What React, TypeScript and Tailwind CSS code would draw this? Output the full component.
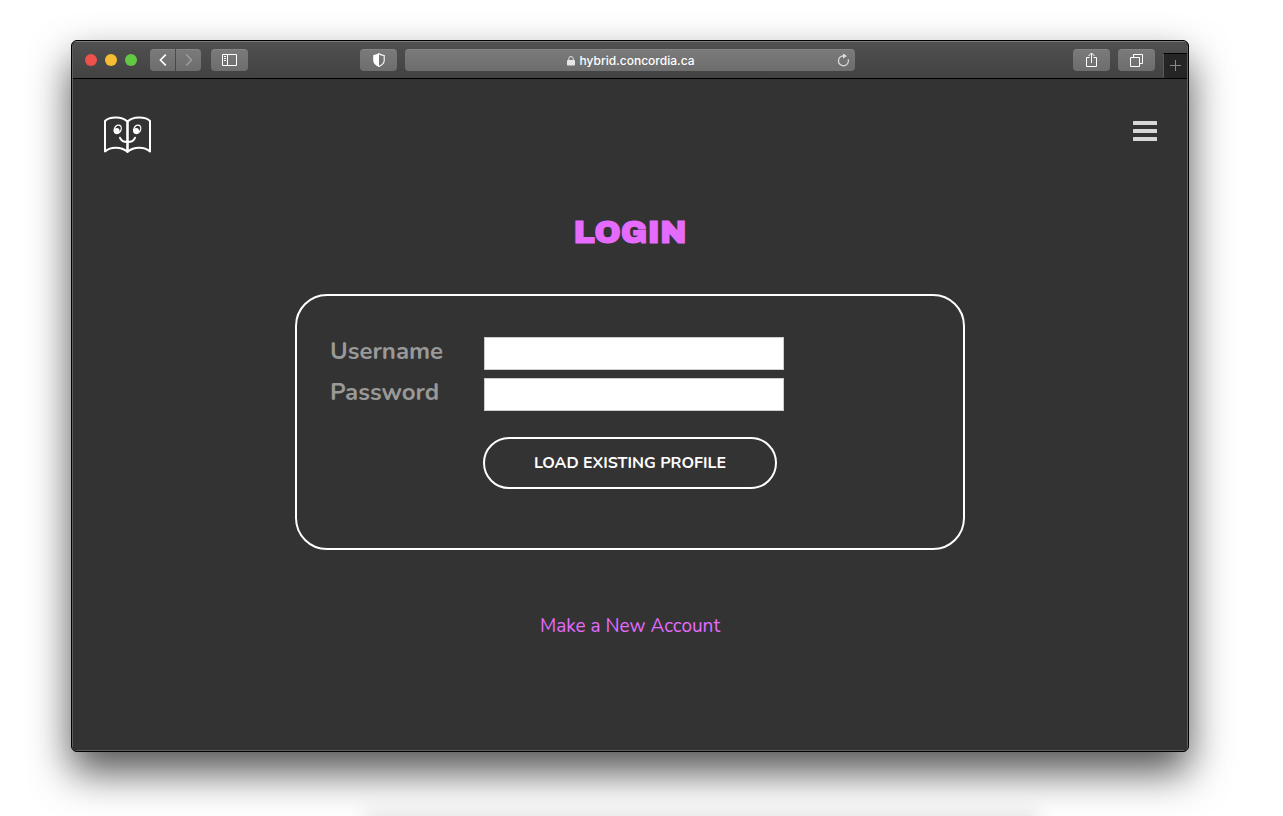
import type { ReactNode } from "react";

interface ToolbarButtonProps {
    label: string;
    className: string;
    children: ReactNode;
}

const ToolbarButton = ({ label, className, children }: ToolbarButtonProps) => (
    <button
        type="button"
        aria-label={label}
        className={`flex h-[22px] shrink-0 items-center justify-center border-t border-[#858585] bg-linear-to-b from-[#7a7a7a] to-[#6d6d6d] pb-px text-white ${className}`}
    >
        {children}
    </button>
);

const Toolbar = () => (
    <div className="flex h-[37px] items-center border-b border-black bg-linear-to-b from-[#505050] to-[#424242]">
        {/* Window controls and navigation */}
        <div className="flex w-[287px] shrink-0 items-center pl-3">
            <div className="flex gap-2">
                <span className="size-3 rounded-full bg-[#ed524a]" />
                <span className="size-3 rounded-full bg-[#f6bd32]" />
                <span className="size-3 rounded-full bg-[#61ca42]" />
            </div>
            <div className="ml-[13px] flex gap-px">
                <ToolbarButton label="Back" className="w-[25px] rounded-l">
                    <svg viewBox="0 0 8 12" className="h-3 w-2" fill="none" stroke="currentColor" strokeWidth="1.6">
                        <path d="M6.8 .6 1.4 6l5.4 5.4" />
                    </svg>
                </ToolbarButton>
                <ToolbarButton label="Forward" className="w-[25px] rounded-r">
                    <svg viewBox="0 0 8 12" className="h-3 w-2 text-[#a0a0a0]" fill="none" stroke="currentColor" strokeWidth="1.4">
                        <path d="M1.2 .6 6.6 6l-5.4 5.4" />
                    </svg>
                </ToolbarButton>
            </div>
            <ToolbarButton label="Show sidebar" className="ml-[10px] w-[37px] rounded">
                <svg viewBox="0 0 15 12" className="h-3 w-[15px]" fill="none" stroke="currentColor">
                    <path d="M.5 .5h14v11H.5zM5.5 .5v11M2 2.5h2M2 4.5h2M2 6.5h2" />
                </svg>
            </ToolbarButton>
        </div>

        {/* Address bar */}
        <div className="flex min-w-0 flex-1 gap-2">
            <ToolbarButton label="Privacy report" className="w-[37px] rounded">
                <svg viewBox="0 0 12 14" className="h-[14px] w-3">
                    <path d="M6 .8c1.4 1.1 3.1 1.6 5.2 1.7v5c0 2.6-1.7 4.4-5.2 5.9C2.5 11.9.8 10.1.8 7.5v-5C2.9 2.4 4.6 1.9 6 .8z" fill="none" stroke="currentColor" strokeWidth="1.1" />
                    <path d="M6 .8v12.6C2.5 11.9.8 10.1.8 7.5v-5C2.9 2.4 4.6 1.9 6 .8z" fill="currentColor" />
                </svg>
            </ToolbarButton>
            <div className="flex h-[22px] min-w-0 flex-1 items-center rounded border-t border-[#858585] bg-linear-to-b from-[#7a7a7a] to-[#6d6d6d] pr-1 pl-5 text-white">
                <div className="flex flex-1 items-center justify-center gap-1">
                    <svg viewBox="0 0 8 10" className="h-[10px] w-2 text-[#e6e6e6]">
                        <rect x="0" y="4" width="8" height="5.5" rx=".8" fill="currentColor" />
                        <path d="M1.8 4.5V2.700a2.2 2.2 0 0 1 4.4 0v2" fill="none" stroke="currentColor" />
                    </svg>
                    <span className="font-['Inter',sans-serif] text-xs font-medium">hybrid.concordia.ca</span>
                </div>
                <button type="button" aria-label="Reload" className="text-[#e0e0e0]">
                    <svg viewBox="0 0 14 14" className="size-[14px]" fill="none" stroke="currentColor" strokeWidth="1.2">
                        <path d="M11.2 5.2A5 5 0 1 1 6.500 1.8" />
                        <path d="M6 -.6 9.9 2 6 4.6z" fill="currentColor" stroke="none" />
                    </svg>
                </button>
            </div>
        </div>

        <div className="flex w-[332px] shrink-0 items-center justify-end self-stretch">
            <div className="flex gap-2">
                <ToolbarButton label="Share" className="w-[37px] rounded">
                    <svg viewBox="0 0 13 16" className="h-4 w-[13px]" fill="none" stroke="currentColor">
                        <path d="M4.5 5.5h-3v9h10v-9h-3M6.5 11V1.2M3.5 4l3-3 3 3" />
                    </svg>
                </ToolbarButton>
                <ToolbarButton label="Show tabs" className="w-[37px] rounded">
                    <svg viewBox="0 0 13 13" className="size-[13px]" fill="none" stroke="currentColor">
                        <path d="M.5 3.5h9v9h-9zM3.5 3.5v-3h9v9h-3" />
                    </svg>
                </ToolbarButton>
            </div>
            <button
                type="button"
                aria-label="New tab"
                className="ml-2 flex h-[25px] w-6 items-center justify-center self-end border-t border-l border-t-black border-l-[#5a5a5a] bg-[#252525] pb-px text-[#8a8a8a]"
            >
                <svg viewBox="0 0 11 11" className="size-[11px]" fill="none" stroke="currentColor">
                    <path d="M5.5 0v11M0 5.5h11" />
                </svg>
            </button>
        </div>
    </div>
);

const BookLogo = () => (
    <svg viewBox="0 -1 48 40" className="h-10 w-12" fill="none" stroke="white" strokeLinecap="round" strokeLinejoin="round">
        <path
            d="M1 5C5 .6 18 -.4 23.5 5.6 29 -.4 42 .6 46 5V35.4C40 30.2 30 30.6 23.5 35.6 17 30.6 7 30.2 1 35.4z"
            strokeWidth="2"
        />
        <path d="M23.5 5.6v30" strokeWidth="2.6" />
        <path d="M16 21.8c2.2 5.6 12.8 5.6 15 0" strokeWidth="2" />
        <g strokeWidth="1.3">
            <ellipse cx="13.7" cy="13.3" rx="3.3" ry="4.4" transform="rotate(28 13.7 13.3)" />
            <ellipse cx="33.2" cy="13.3" rx="3.3" ry="4.4" transform="rotate(28 33.2 13.3)" />
        </g>
        <g fill="white" stroke="none">
            <circle cx="12.7" cy="14.8" r="2.9" />
            <circle cx="32.2" cy="14.8" r="2.9" />
        </g>
    </svg>
);

interface FieldProps {
    id: string;
    label: string;
    type: string;
}

const Field = ({ id, label, type }: FieldProps) => (
    <div className="flex items-start">
        <label htmlFor={id} className="w-[154px] shrink-0 text-2xl leading-7 font-bold text-[#999999]">
            {label}
        </label>
        <input id={id} type={type} className="h-[33px] w-[300px] min-w-0 border border-[#cccccc] bg-white px-2 text-black" />
    </div>
);

const LoginPage = () => (
    <main className="bg-[#333333] pb-[110px] font-['Nunito','Lato',sans-serif]">
        <header className="flex items-start justify-between pt-9 pr-[30px] pl-[31px]">
            <a href="#" aria-label="Home">
                <BookLogo />
            </a>
            <button type="button" aria-label="Menu" className="flex h-8 items-center text-[#d8d6d8]">
                <svg viewBox="0 0 24 20" className="h-5 w-6" fill="currentColor">
                    <rect width="24" height="4" rx=".6" />
                    <rect y="8" width="24" height="4" rx=".6" />
                    <rect y="16" width="24" height="4" rx=".6" />
                </svg>
            </button>
        </header>

        <h1 className="mt-[58px] text-center font-['Archivo_Black','Inter',sans-serif] text-[32px] leading-10 font-bold text-[#e56bff]">LOGIN</h1>

        <form className="mx-auto mt-[41px] max-w-[670px] rounded-[32px] border-2 border-white px-[33px] pt-[41px] pb-[59px]">
            <div className="flex flex-col gap-2">
                <Field id="username" label="Username" type="text" />
                <Field id="password" label="Password" type="password" />
            </div>
            <button
                type="button"
                className="mx-auto mt-[26px] block h-[52px] w-[294px] rounded-full border-2 border-white text-base font-bold text-white"
            >
                LOAD EXISTING PROFILE
            </button>
        </form>

        <p className="mt-[62px] text-center text-[19px] leading-7">
            <a href="#" className="text-[#e56bff]">
                Make a New Account
            </a>
        </p>
    </main>
);

const App = () => (
    <div className="min-h-screen overflow-hidden bg-white pt-10 pr-[94px] pl-[71px]">
        <div className="rounded-md border border-black bg-black shadow-[0_20px_40px_rgba(0,0,0,0.68)]">
            <div className="overflow-hidden rounded-[5px] border border-[#5f5f5f] border-t-[#7d7d7d]">
                <Toolbar />
                <LoginPage />
            </div>
        </div>
        {/* Edge of the next shadow below the window */}
        <div className="mx-auto mt-[63px] h-px max-w-[660px] translate-x-[72px] bg-[#ededed] shadow-[0_6px_20px_8px_rgba(0,0,0,0.12)]" />
    </div>
);

export default App;
